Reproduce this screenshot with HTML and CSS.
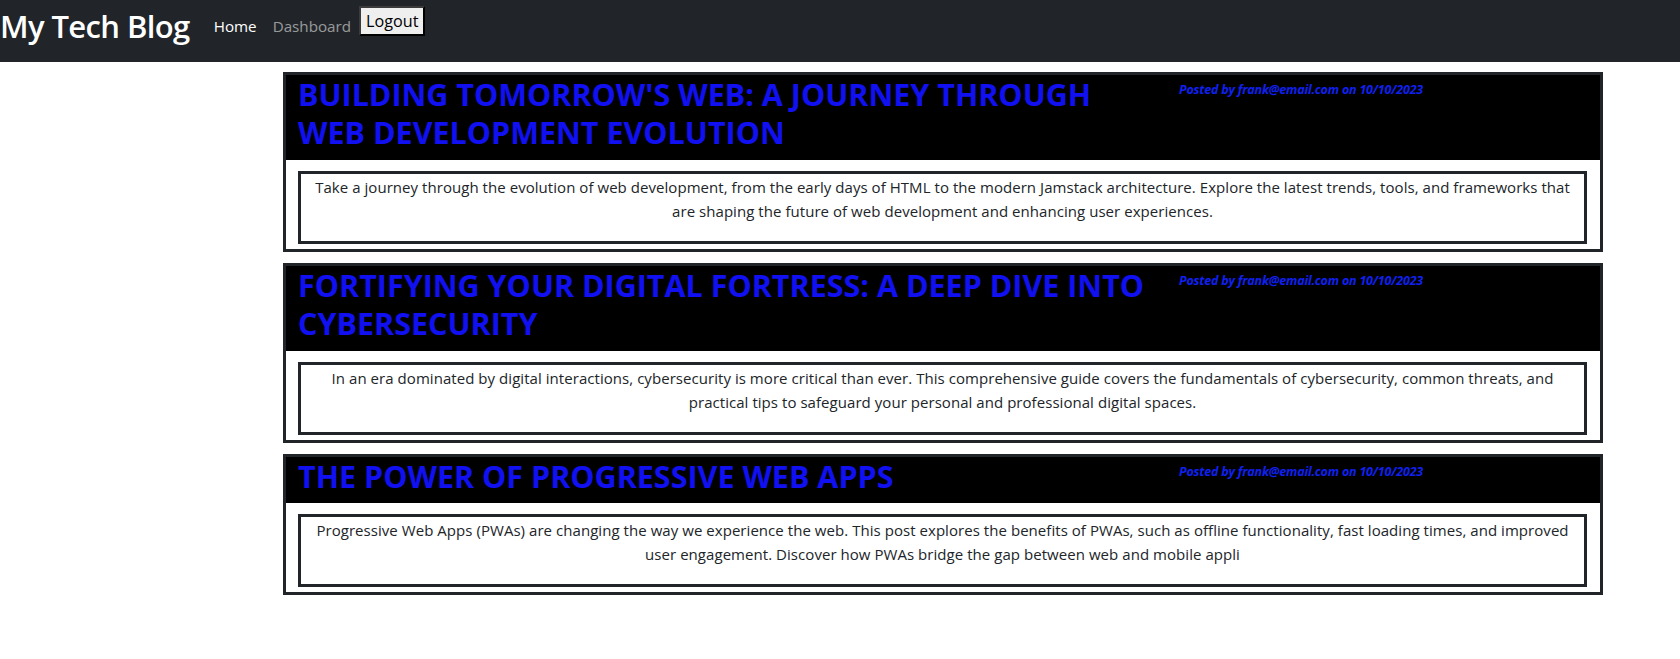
FILE: index.html
```html
<!DOCTYPE html>
<html lang="en">
<head>
<meta charset="utf-8">
<title>My Tech Blog</title>
<link rel="stylesheet" href="styles.css">
</head>
<body>
<nav class="navbar">
  <h1 class="brand">My Tech Blog</h1>
  <a class="nav-link active" href="#">Home</a>
  <a class="nav-link" href="#">Dashboard</a>
  <button class="logout" type="button">Logout</button>
</nav>
<main class="posts">
  <article class="post">
    <header class="post-head">
      <h2 class="post-title">BUILDING TOMORROW'S WEB: A JOURNEY THROUGH WEB DEVELOPMENT EVOLUTION</h2>
      <p class="post-meta">Posted by frank@email.com on 10/10/2023</p>
    </header>
    <div class="post-body">
      <p>Take a journey through the evolution of web development, from the early days of HTML to the modern Jamstack architecture. Explore the latest trends, tools, and frameworks that are shaping the future of web development and enhancing user experiences.</p>
    </div>
  </article>
  <article class="post">
    <header class="post-head">
      <h2 class="post-title">FORTIFYING YOUR DIGITAL FORTRESS: A DEEP DIVE INTO CYBERSECURITY</h2>
      <p class="post-meta">Posted by frank@email.com on 10/10/2023</p>
    </header>
    <div class="post-body">
      <p>In an era dominated by digital interactions, cybersecurity is more critical than ever. This comprehensive guide covers the fundamentals of cybersecurity, common threats, and practical tips to safeguard your personal and professional digital spaces.</p>
    </div>
  </article>
  <article class="post">
    <header class="post-head">
      <h2 class="post-title">THE POWER OF PROGRESSIVE WEB APPS</h2>
      <p class="post-meta">Posted by frank@email.com on 10/10/2023</p>
    </header>
    <div class="post-body">
      <p>Progressive Web Apps (PWAs) are changing the way we experience the web. This post explores the benefits of PWAs, such as offline functionality, fast loading times, and improved user engagement. Discover how PWAs bridge the gap between web and mobile appli</p>
    </div>
  </article>
</main>
</body>
</html>
```

FILE: styles.css
```css
* { box-sizing: border-box; }

body {
  margin: 0;
  font-family: "Open Sans", "Noto Sans", sans-serif;
  font-size: 16px;
  line-height: 1.5;
  color: #212529;
  background: #fff;
}

.navbar {
  height: 62px;
  background: #212529;
  display: flex;
  align-items: flex-start;
}

.brand {
  margin: 8px 0 0 0;
  font-size: 31px;
  font-weight: 600;
  line-height: 1.2;
  color: #fff;
  letter-spacing: -0.6px;
}

.nav-link {
  display: block;
  margin-top: 14px;
  padding: 0 8px;
  font-size: 15.2px;
  line-height: 24px;
  color: rgba(255, 255, 255, 0.55);
  text-decoration: none;
}

.nav-link.active {
  margin-left: 16px;
  color: #fff;
}

.logout {
  margin: 6px 0 0 0;
  height: 30px;
  padding: 0 5px;
  font-family: "Open Sans", sans-serif;
  font-size: 16.2px;
  line-height: 24px;
  color: #000;
  background: #efefef;
  border: 2px solid;
  border-color: #3b3b3b #000 #000 #3b3b3b;
}

.posts {
  width: 1320px;
  margin: 10px 0 0 283px;
  display: flex;
  flex-direction: column;
  gap: 11px;
}

.post {
  border: 3px solid #212529;
}

.post-head {
  background: #000;
  display: flex;
  padding: 0 12px;
}

.post-title {
  flex: 0 0 852px;
  margin: 0 0 8px;
  font-size: 30.5px;
  font-weight: 700;
  line-height: 38.4px;
  color: #1010f0;
}

.post-meta {
  margin: 6px 0 0 29px;
  font-size: 12.5px;
  font-weight: 700;
  font-style: italic;
  line-height: 18px;
  color: #1020f0;
  letter-spacing: -0.2px;
}

.post-body {
  margin: 11px 13px 5px 12px;
  border: 3px solid #212529;
  padding: 1px 10px 0;
}

.post-body p {
  margin: 0 0 18px;
  text-align: center;
  font-size: 15px;
  line-height: 24px;
  letter-spacing: 0.05px;
}
```
